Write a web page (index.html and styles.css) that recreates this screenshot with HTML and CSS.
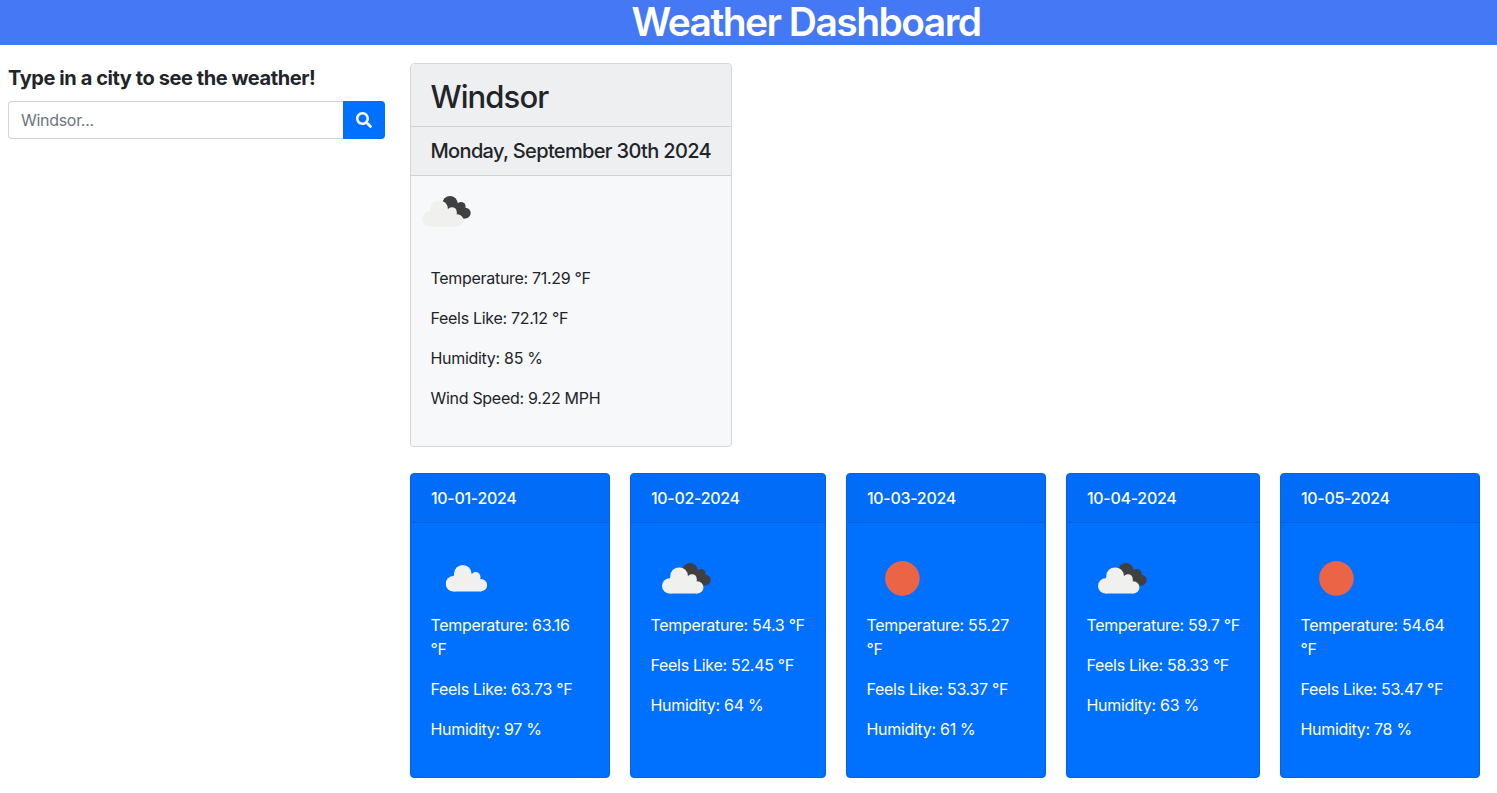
FILE: index.html
```html
<!DOCTYPE html>
<html lang="en">
<head>
<meta charset="utf-8">
<title>Weather Dashboard</title>
<link rel="stylesheet" href="styles.css">
</head>
<body>
<svg class="defs" aria-hidden="true">
  <symbol id="cloud" viewBox="0 0 42 27"><circle cx="7.7" cy="18.7" r="7.7"/><circle cx="17.1" cy="8.8" r="8.8"/><circle cx="30" cy="11.7" r="4.7"/><circle cx="35.2" cy="20.2" r="6.2"/><path d="M7.7 11 9 8.8H25.5L30 11.7H34.6V14L35.2 26.4H7.7Z"/></symbol>
  <symbol id="scattered" viewBox="0 0 70 70"><use href="#cloud" x="14.7" y="22" width="42" height="27" fill="#f0f0ee"/></symbol>
  <symbol id="broken" viewBox="0 0 70 70"><g fill="#404042"><circle cx="39" cy="27.7" r="7.7"/><circle cx="50" cy="30.6" r="4.6"/><circle cx="54.4" cy="37.1" r="5.3"/><path d="M34 31 45 26 54.5 32 54 42.4H49L38 35Z"/></g><use href="#cloud" x="11" y="24.2" width="42" height="27" fill="#f0f0ee"/></symbol>
  <symbol id="sun" viewBox="0 0 70 70"><circle cx="35.4" cy="35.4" r="17.3" fill="#eb6445"/></symbol>
</svg>
<header class="banner"><h1 class="banner-title">Weather Dashboard</h1></header>
<main class="layout">
  <aside class="search">
    <h2 class="search-title">Type in a city to see the weather!</h2>
    <form class="search-group">
      <input class="search-input" type="text" placeholder="Windsor...">
      <button class="search-button" type="button" aria-label="Search"><svg class="search-icon" viewBox="0 0 512 512"><path fill="currentColor" d="M505 442.7L405.3 343c-4.5-4.500-10.600-7-17-7H372c27.600-35.300 44-79.700 44-128C416 93.100 322.900 0 208 0S0 93.100 0 208s93.100 208 208 208c48.300 0 92.700-16.400 128-44v16.300c0 6.400 2.500 12.500 7 17l99.700 99.700c9.400 9.400 24.600 9.400 33.900 0l28.300-28.300c9.400-9.400 9.400-24.600.1-34zM208 336c-70.700 0-128-57.200-128-128 0-70.700 57.200-128 128-128 70.700 0 128 57.200 128 128 0 70.700-57.200 128-128 128z"/></svg></button>
    </form>
  </aside>
  <div class="results">
    <section class="current">
      <div class="current-head"><h2 class="current-city">Windsor</h2></div>
      <div class="current-head"><h3 class="current-date">Monday, September 30th 2024</h3></div>
      <svg class="icon"><use href="#broken"/></svg>
      <div class="current-body">
        <p>Temperature: 71.29 °F</p><p>Feels Like: 72.12 °F</p><p>Humidity: 85 %</p><p>Wind Speed: 9.22 MPH</p>
      </div>
    </section>
    <section class="forecast">
      <article class="day"><div class="day-head">10-01-2024</div><div class="day-body"><svg class="icon"><use href="#scattered"/></svg><p>Temperature: 63.16<br>°F</p><p>Feels Like: 63.73 °F</p><p>Humidity: 97 %</p></div></article>
      <article class="day day-second"><div class="day-head">10-02-2024</div><div class="day-body"><svg class="icon"><use href="#broken"/></svg><p>Temperature: 54.3 °F</p><p>Feels Like: 52.45 °F</p><p>Humidity: 64 %</p></div></article>
      <article class="day"><div class="day-head">10-03-2024</div><div class="day-body"><svg class="icon"><use href="#sun"/></svg><p>Temperature: 55.27<br>°F</p><p>Feels Like: 53.37 °F</p><p>Humidity: 61 %</p></div></article>
      <article class="day day-fourth"><div class="day-head">10-04-2024</div><div class="day-body"><svg class="icon"><use href="#broken"/></svg><p>Temperature: 59.7 °F</p><p>Feels Like: 58.33 °F</p><p>Humidity: 63 %</p></div></article>
      <article class="day"><div class="day-head">10-05-2024</div><div class="day-body"><svg class="icon"><use href="#sun"/></svg><p>Temperature: 54.64<br>°F</p><p>Feels Like: 53.47 °F</p><p>Humidity: 78 %</p></div></article>
    </section>
  </div>
</main>
</body>
</html>
```
FILE: styles.css
```css
* { box-sizing: border-box; }
body { margin: 0; background: #fff; color: #212529; font: 400 16px/24px Inter, "Liberation Sans", sans-serif; letter-spacing: -0.3px; }
h1, h2, h3, p { margin: 0; }
.defs { display: none; }
.banner { height: 45px; background: #4478f5; padding-left: 115px; }
.banner-title { color: #fff; text-align: center; font-size: 39px; font-weight: 600; line-height: 44px; letter-spacing: -1.55px; }
.layout { display: flex; padding: 18px 0 0 8px; }
.search { width: 377px; margin-right: 25px; padding-top: 3px; flex: none; }
.search-title { font-size: 20px; font-weight: 700; line-height: 24px; margin-bottom: 11px; letter-spacing: -0.42px; }
.search-group { display: flex; height: 38px; }
.search-input { flex: 1; min-width: 0; border: 1px solid #ced4da; border-right: 0; border-radius: 4px 0 0 4px; padding: 0 12px; font: inherit; letter-spacing: inherit; }
.search-input::placeholder { color: #6c757d; opacity: 1; }
.search-button { width: 42px; padding: 0; border: 0; border-radius: 0 4px 4px 0; background: #0070ff; color: #fff; display: flex; align-items: center; justify-content: center; }
.search-icon { width: 16px; height: 16px; }
.current { width: 322px; height: 384px; border: 1px solid #d5d7d9; border-radius: 4px; background: #f7f8fa; overflow: hidden; }
.current-head { padding: 12px 19.5px; background: #eeeff1; border-bottom: 1px solid #d0d2d4; white-space: nowrap; }
.current-city { font-size: 31px; font-weight: 500; line-height: 38px; letter-spacing: -0.9px; padding-top: 2px; height: 38px; }
.current-date { font-size: 20px; font-weight: 500; line-height: 24px; letter-spacing: -0.66px; }
.icon { display: block; width: 70px; height: 70px; }
.current-body { padding: 20px 19.5px; }
p { margin-bottom: 16px; white-space: nowrap; }
.forecast { display: flex; gap: 20px; margin-top: 26px; }
.day { width: 200px; height: 305px; border: 1px solid #0063e0; border-radius: 4px; background: #0070ff; color: #fff; overflow: hidden; }
.day-second { width: 196px; }
.day-fourth { width: 194px; }
.day-head { padding: 12px 20px; background: #006cf7; border-bottom: 1px solid #0062df; font-weight: 500; }
.day-body { padding: 20px; }
.day-body p { margin-left: -0.5px; }
```
